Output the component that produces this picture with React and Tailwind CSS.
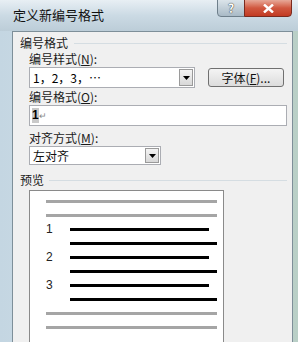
import React from "react";

const cjk = { fontFamily: '"Noto Sans CJK SC", "Noto Sans", sans-serif' };

function Arrow() {
  return (
    <div className="m-[1px] flex w-[14px] items-center justify-center border border-[#9a9a9a] bg-gradient-to-b from-[#f4f4f4] to-[#d8d8d8]">
      <svg width="7" height="4" viewBox="0 0 7 4"><path d="M0 0h7L3.5 4z" fill="#000" /></svg>
    </div>
  );
}

function Label({ children, k }) {
  return (
    <div className="h-[16px] pl-[16px] text-[12px] leading-[16px] text-[#1a1a1a]">
      {children}(<span className="underline">{k}</span>):
    </div>
  );
}

function Line({ gray, w }) {
  return <div className={`h-[3px] ${gray ? "bg-[#a5a5a5]" : "bg-black"}`} style={{ width: w }} />;
}

function Row({ children, pl = 16 }) {
  return (
    <div className="flex h-[14px] items-center" style={{ paddingLeft: pl }}>
      {children}
    </div>
  );
}

function Num({ n }) {
  return (
    <span className="w-[24px] text-[12px] leading-none text-[#222]" style={{ fontFamily: '"Liberation Sans", sans-serif' }}>{n}</span>
  );
}

export default function App() {
  return (
    <div className="flex h-[342px] w-[298px] flex-col overflow-hidden bg-gradient-to-r from-[#c4d6e2] via-[#d3e0e8] to-[#b9cfc6]" style={cjk}>
      <div className="relative h-[31px] shrink-0 bg-gradient-to-b from-[#e8eff4] via-[#cbdae4] to-[#bccdd8]">
        <div className="pl-[13px] pt-[6px] text-[13px] leading-[18px] text-[#111]">定义新编号格式</div>
        <div className="absolute left-[217px] top-[-1px] flex h-[18px] w-[28px] items-center justify-center rounded-bl-[4px] border border-[#6e7f8b] bg-gradient-to-b from-[#dbe4ea] to-[#a9bac6] text-[12px] font-bold leading-none text-white" style={{ textShadow: "0 0 1px #333, 0 0 1px #333" }}>?</div>
        <div className="absolute left-[244px] top-[-1px] flex h-[18px] w-[48px] items-center justify-center rounded-br-[4px] border border-[#7a2a1e] bg-gradient-to-b from-[#e6a898] via-[#d0573f] to-[#c23a22]">
          <svg width="11" height="9" viewBox="0 0 11 9"><path d="M1 0.5l9 8M10 0.5l-9 8" stroke="#fff" strokeWidth="2.4" /></svg>
        </div>
      </div>
      <div className="ml-[12px] mr-[5px] flex h-[340px] shrink-0 flex-col border border-[#7e8f99] bg-[#f0f0f0] pt-[3px]">
        <div className="flex h-[16px] items-center pl-[7px]">
          <span className="text-[12px] leading-[16px] text-[#1a1a1a]">编号格式</span>
          <div className="ml-[6px] mr-[5px] h-px flex-1 bg-[#d5dde2]" />
        </div>
        <Label k="N">编号样式</Label>
        <div className="flex h-[21px] items-stretch pl-[16px]">
          <div className="flex w-[166px] border border-[#abadb3] bg-white">
            <div className="flex-1 pl-[3px] text-[12px] leading-[19px]">1，2，3，…</div>
            <Arrow />
          </div>
          <div className="ml-[13px] mt-[1px] flex h-[19px] w-[76px] items-center justify-center rounded-[3px] border border-[#707070] bg-gradient-to-b from-[#f4f4f4] to-[#dcdcdc] text-[12px] leading-none text-[#111]">
            字体(<span className="underline">F</span>)...
          </div>
        </div>
        <div className="h-[1px]" />
        <Label k="O">编号格式</Label>
        <div className="ml-[16px] mr-[5px] flex h-[21px] items-center border border-[#abadb3] bg-white pl-[2px]">
          <span className="bg-[#c9c9c9] text-[12px] leading-[15px]" style={{ fontFamily: '"Liberation Sans", sans-serif', fontWeight: 700 }}>1</span>
          <span className="text-[9px] leading-none text-[#888]">↵</span>
        </div>
        <div className="h-[4px]" />
        <Label k="M">对齐方式</Label>
        <div className="ml-[16px] flex h-[19px] w-[132px] border border-[#abadb3] bg-white">
          <div className="flex-1 pl-[3px] text-[12px] leading-[17px] text-[#111]">左对齐</div>
          <Arrow />
        </div>
        <div className="h-[7px]" />
        <div className="flex h-[16px] items-center pl-[7px]">
          <span className="text-[12px] leading-[16px] text-[#1a1a1a]">预览</span>
          <div className="ml-[5px] mr-[5px] h-px flex-1 bg-[#d5dde2]" />
        </div>
        <div className="ml-[16px] mt-[2px] h-[170px] w-[195px] shrink-0 border border-[#8a8a8a] bg-white pt-[3px]">
          <Row><Line gray w={171} /></Row>
          <Row><Line gray w={171} /></Row>
          <Row><Num n="1" /><Line w={139} /></Row>
          <Row pl={40}><Line w={147} /></Row>
          <Row><Num n="2" /><Line w={139} /></Row>
          <Row pl={40}><Line w={147} /></Row>
          <Row><Num n="3" /><Line w={139} /></Row>
          <Row pl={40}><Line w={147} /></Row>
          <Row><Line gray w={171} /></Row>
          <Row><Line gray w={171} /></Row>
        </div>
      </div>
    </div>
  );
}
